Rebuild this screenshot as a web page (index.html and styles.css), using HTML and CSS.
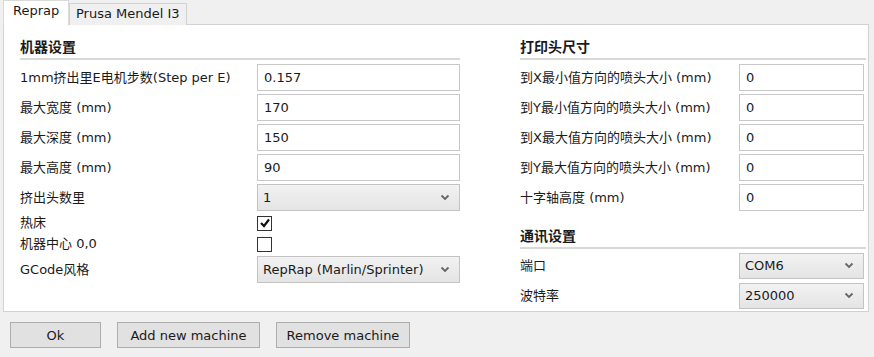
FILE: index.html
```html
<!DOCTYPE html>
<html lang="zh">
<head>
  <meta charset="UTF-8" />
  <title>Machine settings</title>
  <link rel="stylesheet" href="styles.css">
</head>
<body>
  <div class="tabs">
    <div class="tab active">Reprap</div>
    <div class="tab">Prusa Mendel I3</div>
  </div>

  <div class="panel">
    <div class="col left">
      <div class="section-title">机器设置</div>
      <div class="rows">
        <label>1mm挤出里E电机步数(Step per E)</label>
        <input type="text" value="0.157" />

        <label>最大宽度 (mm)</label>
        <input type="text" value="170" />

        <label>最大深度 (mm)</label>
        <input type="text" value="150" />

        <label>最大高度 (mm)</label>
        <input type="text" value="90" />

        <label>挤出头数里</label>
        <div class="select">
          <span>1</span>
          <svg width="10" height="7" viewBox="0 0 10 7"><path d="M1.5 1.5 L5 5 L8.5 1.5" fill="none" stroke="#666" stroke-width="1.8"/></svg>
        </div>

        <label class="small">热床</label>
        <span class="check">
          <svg width="12" height="12" viewBox="0 0 12 12"><path d="M2 6 L5 9 L10 2.5" fill="none" stroke="#111" stroke-width="2.2"/></svg>
        </span>

        <label class="small">机器中心 0,0</label>
        <span class="check"></span>

        <label>GCode风格</label>
        <div class="select">
          <span>RepRap (Marlin/Sprinter)</span>
          <svg width="10" height="7" viewBox="0 0 10 7"><path d="M1.5 1.5 L5 5 L8.5 1.5" fill="none" stroke="#666" stroke-width="1.8"/></svg>
        </div>
      </div>
    </div>

    <div class="col right">
      <div class="section-title">打印头尺寸</div>
      <div class="rows">
        <label>到X最小值方向的喷头大小 (mm)</label>
        <input type="text" value="0" />

        <label>到Y最小值方向的喷头大小 (mm)</label>
        <input type="text" value="0" />

        <label>到X最大值方向的喷头大小 (mm)</label>
        <input type="text" value="0" />

        <label>到Y最大值方向的喷头大小 (mm)</label>
        <input type="text" value="0" />

        <label>十字轴高度 (mm)</label>
        <input type="text" value="0" />
      </div>

      <div class="section-title second">通讯设置</div>
      <div class="rows">
        <label>端口</label>
        <div class="select">
          <span>COM6</span>
          <svg width="10" height="7" viewBox="0 0 10 7"><path d="M1.5 1.5 L5 5 L8.5 1.5" fill="none" stroke="#666" stroke-width="1.8"/></svg>
        </div>

        <label>波特率</label>
        <div class="select">
          <span>250000</span>
          <svg width="10" height="7" viewBox="0 0 10 7"><path d="M1.5 1.5 L5 5 L8.5 1.5" fill="none" stroke="#666" stroke-width="1.8"/></svg>
        </div>
      </div>
    </div>
  </div>

  <div class="buttons">
    <button class="btn-ok">Ok</button>
    <button class="btn-add">Add new machine</button>
    <button class="btn-remove">Remove machine</button>
  </div>
</body>
</html>
```

FILE: styles.css
```css
* {
  box-sizing: border-box;
}

body {
  margin: 0;
  width: 874px;
  height: 357px;
  background: #f0f0f0;
  font-family: "DejaVu Sans", "Noto Sans CJK SC", sans-serif;
  font-size: 13px;
  color: #1a1a1a;
  overflow: hidden;
}

.tabs {
  display: flex;
  align-items: flex-end;
  height: 25px;
  padding-left: 3px;
  margin-bottom: -1px;
}

.tab {
  height: 22px;
  padding: 0 6px;
  line-height: 20px;
  border: 1px solid #d2d2d2;
  border-bottom: none;
  background: #f0f0f0;
  color: #1a1a1a;
}

.tab.active {
  height: 25px;
  width: 66px;
  padding: 0 9px;
  background: #fff;
  border-color: #d9d9d9;
  position: relative;
  z-index: 1;
}

.panel {
  display: flex;
  gap: 60px;
  margin-left: 3px;
  width: 866px;
  height: 288px;
  padding: 11px 0 0 16px;
  background: #fff;
  border: 1px solid #d2d2d2;
}

.col.left {
  width: 440px;
}

.col.right {
  width: 344px;
}

.section-title {
  font-weight: bold;
  font-size: 14px;
  height: 24px;
  line-height: 22px;
  border-bottom: 2px solid #d8d8d8;
  margin-bottom: 4px;
}

.right .section-title {
  margin-right: -2px;
}

.section-title.second {
  margin-top: 14px;
  margin-bottom: 3px;
}

.rows {
  display: grid;
  grid-template-columns: 1fr 203px;
  row-gap: 3px;
  align-items: center;
}

.right .rows {
  grid-template-columns: 1fr 125px;
}

label {
  height: 27px;
  line-height: 27px;
  white-space: nowrap;
}

label.small {
  height: 18px;
  line-height: 18px;
}

input {
  width: 100%;
  height: 27px;
  padding: 0 6px;
  border: 1px solid #c8c8c8;
  font-family: inherit;
  font-size: 13px;
  color: #1a1a1a;
  outline: none;
}

.select {
  height: 27px;
  display: flex;
  align-items: center;
  justify-content: space-between;
  padding: 0 9px 0 5px;
  border: 1px solid #c3c3c3;
  background: linear-gradient(#f2f2f2, #e4e4e4);
}

.right .select {
  height: 26px;
}

.check {
  width: 15px;
  height: 15px;
  border: 1px solid #333;
  background: #fff;
  display: flex;
  align-items: center;
  justify-content: center;
}

.buttons {
  display: flex;
  gap: 16px;
  padding: 10px 0 0 10px;
}

button {
  height: 26px;
  border: 1px solid #adadad;
  background: #e1e1e1;
  font-family: inherit;
  font-size: 13px;
  color: #1a1a1a;
  padding: 0;
}

.btn-ok {
  width: 91px;
}

.btn-add {
  width: 143px;
}

.btn-remove {
  width: 134px;
}
```
